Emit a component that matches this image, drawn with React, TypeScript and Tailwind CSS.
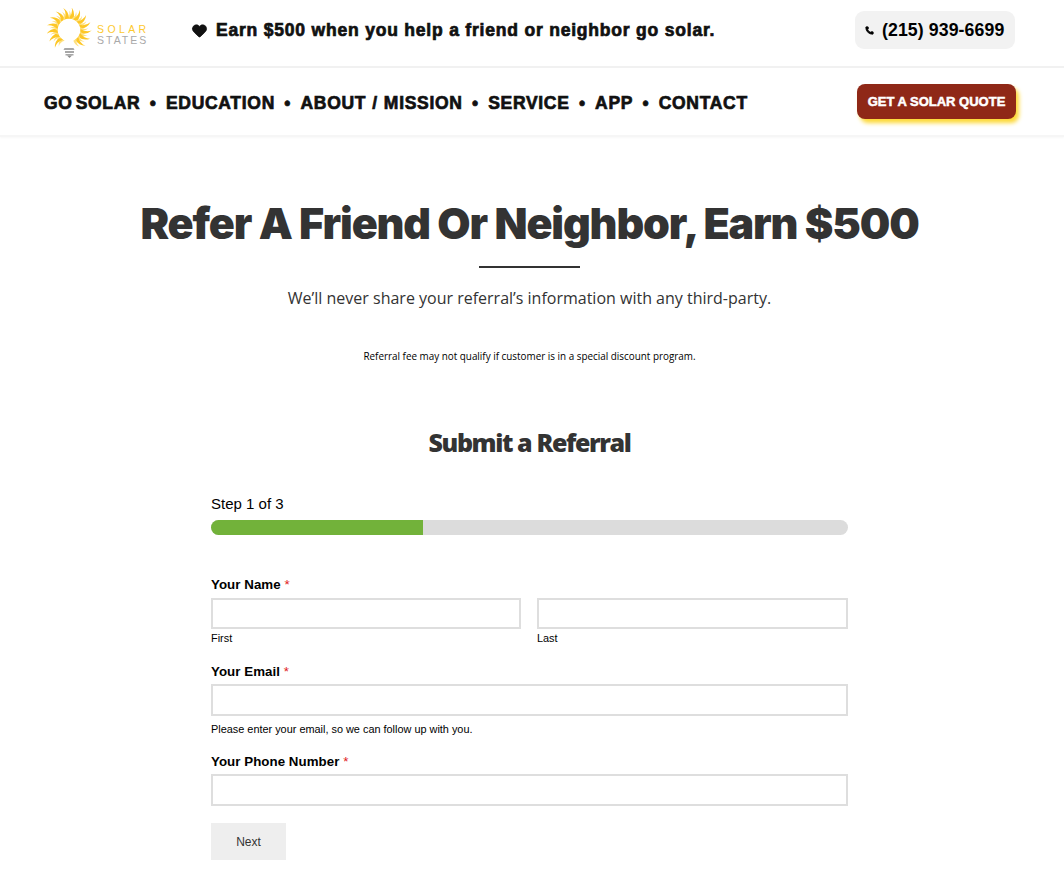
import { Heart, Phone } from "lucide-react";

const rays = Array.from({ length: 34 }, (_, i) => (i * 360) / 34);

function Logo() {
  return (
    <div className="flex items-center w-[102px] h-[50px] shrink-0">
      <svg width="46" height="50" viewBox="0 0 46 50" className="shrink-0">
        <g transform="translate(22 22) scale(1.08)">
          {rays.map((a, i) =>
            a > 155 && a < 205 ? null : (
              <path
                key={a}
                transform={`rotate(${a})`}
                d={i % 2 ? "M-2 -10.5 Q1 -16 -1.5 -21 Q3 -17 2 -10.5 Z" : "M-1.8 -10.5 Q1.5 -14 0 -18 Q2.6 -15 1.8 -10.5 Z"}
                fill={i % 2 ? "#fdc727" : "#fee07f"}
              />
            )
          )}
        </g>
        <path d="M17.5 40h9l1 2h-11zM18 43h9v2h-9zM18.5 46h8v1.5h-8z" fill="#a8a8a8" />
        <path d="M20 47.5h5l-2.5 2.5z" fill="#8c8c8c" />
      </svg>
      <div className="ml-[4px] mt-[4px] text-[10.5px] leading-[11px] font-light">
        <div className="text-[#fdc92f] tracking-[3.4px]">SOLAR</div>
        <div className="text-[#a9a9a9] tracking-[2px]">STATES</div>
      </div>
    </div>
  );
}

export default function App() {
  const nav = ["GO SOLAR", "EDUCATION", "ABOUT / MISSION", "SERVICE", "APP", "CONTACT"];
  const input = "block w-full border-2 border-[#dedede] bg-white";
  const label = "block text-[13.3px] leading-[16px] font-bold text-black tracking-[0.05px]";
  const sub = "block text-[10.9px] leading-[14px] text-black";

  return (
    <div className="min-h-[873px] bg-white font-['Liberation_Sans',sans-serif] overflow-hidden">
      {/* Top bar */}
      <div className="h-[68px] border-b-2 border-[#f1f1f1] pl-[47px] pr-[49px] flex items-center">
        <Logo />
        <div className="ml-[42px] flex items-center gap-[8px] text-[#111] mb-[6px]">
          <Heart className="w-[17px] h-[17px]" fill="currentColor" strokeWidth={1} />
          <span className="text-[17.5px] font-bold [-webkit-text-stroke:0.7px_#111] tracking-[0.8px]">
            Earn $500 when you help a friend or neighbor go solar.
          </span>
        </div>
        <div className="ml-auto mb-[6px] w-[160px] h-[38px] rounded-[9px] bg-[#f2f2f2] flex items-center pl-[10px] gap-[8px]">
          <Phone className="w-[9px] h-[9px] text-black" fill="currentColor" />
          <span className="text-[17.7px] font-bold text-black tracking-[0.1px]">(215) 939-6699</span>
        </div>
      </div>

      {/* Main nav */}
      <div className="h-[69px] border-b-2 border-[#f6f6f6] shadow-[0_1px_2px_rgba(0,0,0,0.03)] pl-[44px] pr-[48px] flex items-center">
        <nav className="mt-[3px] flex items-center text-[17.5px] tracking-[0.7px] font-bold text-[#111] [-webkit-text-stroke:0.7px_#111] [word-spacing:-2.5px]">
          {nav.map((n, i) => (
            <span key={n} className="flex items-center">
              {i > 0 && <span className="w-[25.5px] text-center">•</span>}
              <span className={n === "ABOUT / MISSION" ? "[word-spacing:0.5px]" : ""}>{n}</span>
            </span>
          ))}
        </nav>
        <a className="ml-auto w-[159px] h-[35px] rounded-[8px] bg-[#8f2817] text-white text-[13px] font-bold [-webkit-text-stroke:0.5px_#fff] flex items-center justify-center shadow-[3px_4px_4px_#fdd835]">
          GET A SOLAR QUOTE
        </a>
      </div>

      {/* Hero */}
      <div className="w-[1059px] flex flex-col items-center">
        <h1 className="mt-[58px] text-[43px] leading-[56px] font-black text-[#333] font-['Inter',sans-serif] tracking-[-1.15px]">
          Refer A Friend Or Neighbor, Earn $500
        </h1>
        <div className="mt-[15px] w-[101px] h-[2px] bg-[#333]" />
        <p className="mt-[19px] text-[16px] leading-[22px] text-[#333] font-['Open_Sans',sans-serif]">
          We’ll never share your referral’s information with any third-party.
        </p>
        <p className="mt-[40px] text-[9.9px] leading-[14px] text-black font-['Open_Sans',sans-serif]">
          Referral fee may not qualify if customer is in a special discount program.
        </p>
        <h2 className="mt-[61px] text-[25px] leading-[36px] font-extrabold text-[#333] font-['Open_Sans',sans-serif] tracking-[-1.4px]">
          Submit a Referral
        </h2>
      </div>

      {/* Form */}
      <div className="w-[637px] ml-[211px] mt-[35px]">
        <div className="text-[15px] leading-[18px] text-black">Step 1 of 3</div>
        <div className="mt-[7px] h-[15px] rounded-full bg-[#dcdcdc] overflow-hidden">
          <div className="h-full w-[212px] bg-[#72b23a]" />
        </div>

        <div className={`${label} mt-[42px]`}>
          Your Name <span className="text-[#e02020] font-normal">*</span>
        </div>
        <div className="mt-[5px] flex gap-[16px]">
          <div className="w-[310px]">
            <div className={`${input} h-[31px]`} />
            <span className={`${sub} mt-[2px]`}>First</span>
          </div>
          <div className="flex-1">
            <div className={`${input} h-[31px]`} />
            <span className={`${sub} mt-[2px]`}>Last</span>
          </div>
        </div>

        <div className={`${label} mt-[19px]`}>
          Your Email <span className="text-[#e02020] font-normal">*</span>
        </div>
        <div className={`${input} h-[32px] mt-[4px]`} />
        <span className={`${sub} mt-[6px]`}>Please enter your email, so we can follow up with you.</span>

        <div className={`${label} mt-[18px]`}>
          Your Phone Number <span className="text-[#e02020] font-normal">*</span>
        </div>
        <div className={`${input} h-[32px] mt-[4px]`} />

        <button className="mt-[17px] w-[75px] h-[37px] bg-[#eeeeee] text-[12px] text-[#333]">Next</button>
      </div>
    </div>
  );
}
